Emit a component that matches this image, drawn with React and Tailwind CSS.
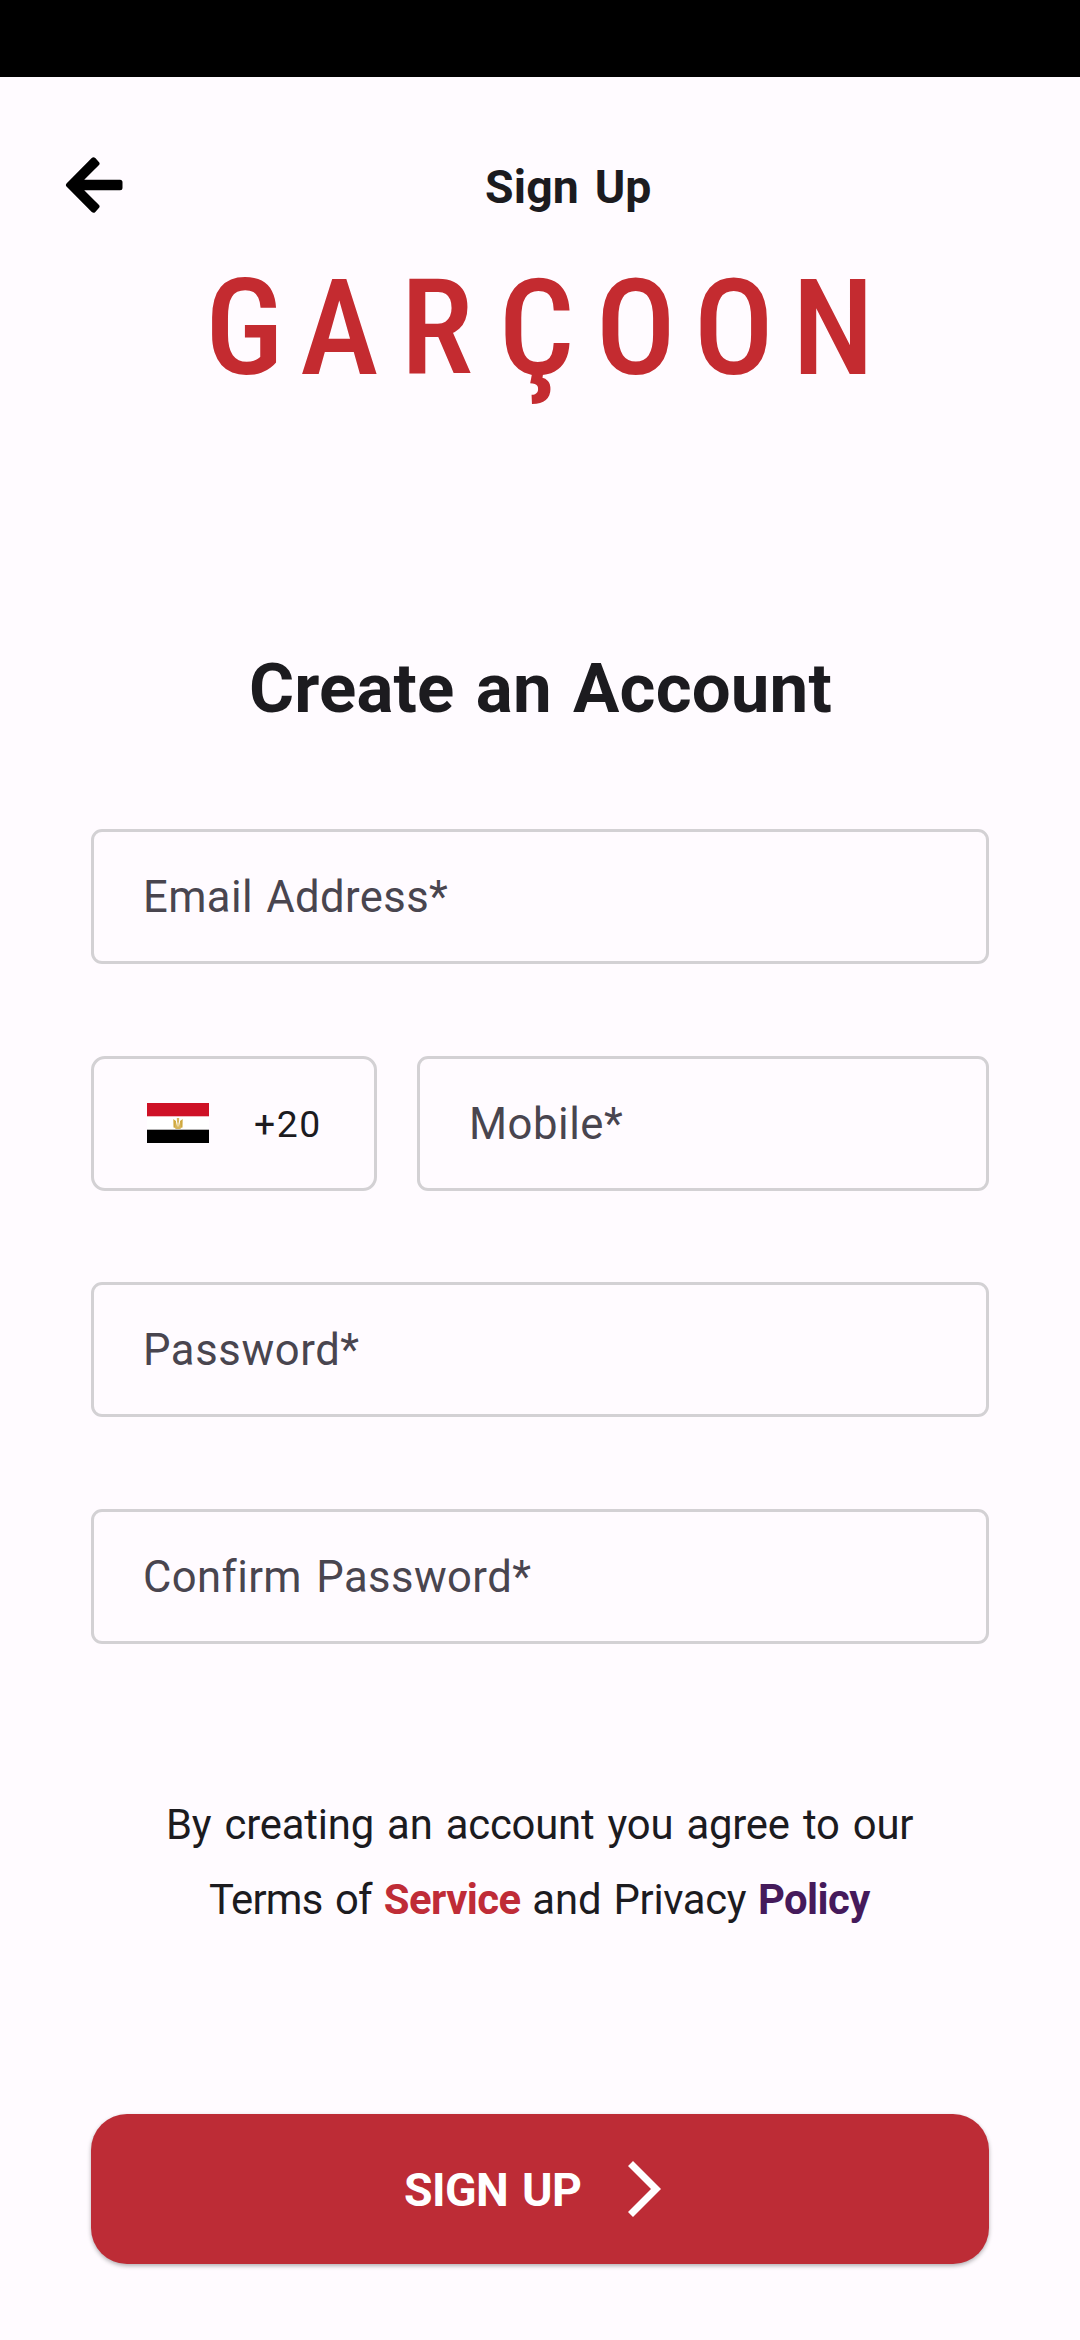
function Field({ label, className = "" }) {
  return (
    <div
      className={`flex h-[135px] items-center rounded-[11px] border-3 border-[#d3d1d4] pt-[3px] pl-[49px] text-[43.6px] leading-none text-[#49454f] ${className}`}
    >
      {label}
    </div>
  );
}

function BackArrow() {
  return (
    <svg className="h-[58px] w-[58px]" viewBox="0 0 58 58" fill="#000" stroke="#000" strokeWidth="5" strokeLinejoin="round">
      <path d="M3.5 29 28.5 3.8 32 7.6 13.2 26.3H55V31.7H13.2L32 50.4 28.5 54.2Z" />
    </svg>
  );
}

function Logo() {
  return (
    <svg className="h-[190px] w-[710px]" viewBox="185 245 710 190" role="img" aria-label="GARÇOON">
      <text
        x="205 300 400.5 498.5 595.5 693.5 792"
        y="374"
        fill="#c42b30"
        className="font-[Roboto] text-[133.6px] font-medium [font-stretch:75%]"
      >
        GARÇOON
      </text>
    </svg>
  );
}

function EgyptFlag() {
  return (
    <svg className="h-[40px] w-[62px]" viewBox="0 0 62 40">
      <rect width="62" height="40" fill="#fff" />
      <rect width="62" height="13.3" fill="#ce1126" />
      <rect y="26.7" width="62" height="13.3" fill="#000" />
      <g fill="#d0a93f">
        <path d="M26.3 16 29 18 28.8 25 26.5 24.5ZM35.7 16 33 18 33.2 25 35.5 24.5Z" />
        <path d="M29.8 15H32.2L32 19 33.8 26H28.2L30 19Z" opacity=".85" />
      </g>
      <path d="M30.3 19.5H31.7V23.5H30.3Z" fill="#f3e3b5" />
    </svg>
  );
}

export default function App() {
  return (
    <div className="flex h-[2340px] w-[1080px] flex-col overflow-hidden bg-[#fffbff] font-[Roboto,sans-serif] text-[#1c1b1f]">
      <div className="h-[77px] shrink-0 bg-black" />

      <header className="mt-[79px] grid h-[58px] shrink-0 grid-cols-[420px_1fr] items-center pl-[65px]">
        <BackArrow />
        <h1 className="pt-1 text-[46.4px] leading-none font-bold tracking-[0.15px] [word-spacing:4px]">Sign Up</h1>
      </header>

      <div className="mt-[31px] flex shrink-0 pl-[185px]">
        <Logo />
      </div>

      <h2 className="mt-[214px] h-[80px] shrink-0 pl-px text-center text-[69px] leading-[80px] font-bold tracking-[0.15px] [word-spacing:4px]">
        Create an Account
      </h2>

      <form className="mt-[100px] flex shrink-0 flex-col gap-[91.5px] px-[91px]">
        <Field label="Email Address*" className="tracking-[0.4px] [word-spacing:2px]" />
        <div className="flex gap-[40px]">
          <div className="flex h-[135px] w-[286px] items-center rounded-[14px] border-3 border-[#d3d1d4] pl-[53px]">
            <EgyptFlag />
            <span className="ml-[45px] pt-[3px] text-[37.3px] leading-none tracking-[1.6px]">+20</span>
          </div>
          <Field label="Mobile*" className="flex-1 tracking-[0.55px]" />
        </div>
        <Field label="Password*" className="tracking-[0.6px]" />
        <Field label="Confirm Password*" className="tracking-[0.42px] [word-spacing:3px]" />
      </form>

      <div className="mt-[143px] shrink-0 text-[41.8px] leading-[75px] whitespace-nowrap">
        <p className="pl-[166px] tracking-[-0.2px] [word-spacing:3px]">By creating an account you agree to our</p>
        <p className="flex pl-[209px]">
          <span className="tracking-[-0.8px] [word-spacing:3px]">Terms of</span>
          <span className="ml-[12px] font-bold tracking-[-0.55px] text-[#bf2c37]">Service</span>
          <span className="ml-[11.7px]">and</span>
          <span className="ml-[12px] tracking-[-0.37px]">Privacy</span>
          <span className="ml-[12px] font-bold tracking-[-0.6px] text-[#451a5b]">Policy</span>
        </p>
      </div>

      <button className="mx-[91px] mt-[177px] flex h-[150px] shrink-0 items-center rounded-[36px] bg-[#bd2c36] pl-[313px] text-white shadow-[0_2px_4px_rgba(0,0,0,0.3)]">
        <span className="pt-1 text-[46.4px] leading-none font-bold tracking-[-0.6px] [word-spacing:3px]">SIGN UP</span>
        <svg className="ml-[47px] h-[56px] w-[33px]" viewBox="0 0 33 56" fill="#fff">
          <path d="M5 0 33 28 5 56 0 51 23 28 0 5Z" />
        </svg>
      </button>
    </div>
  );
}
